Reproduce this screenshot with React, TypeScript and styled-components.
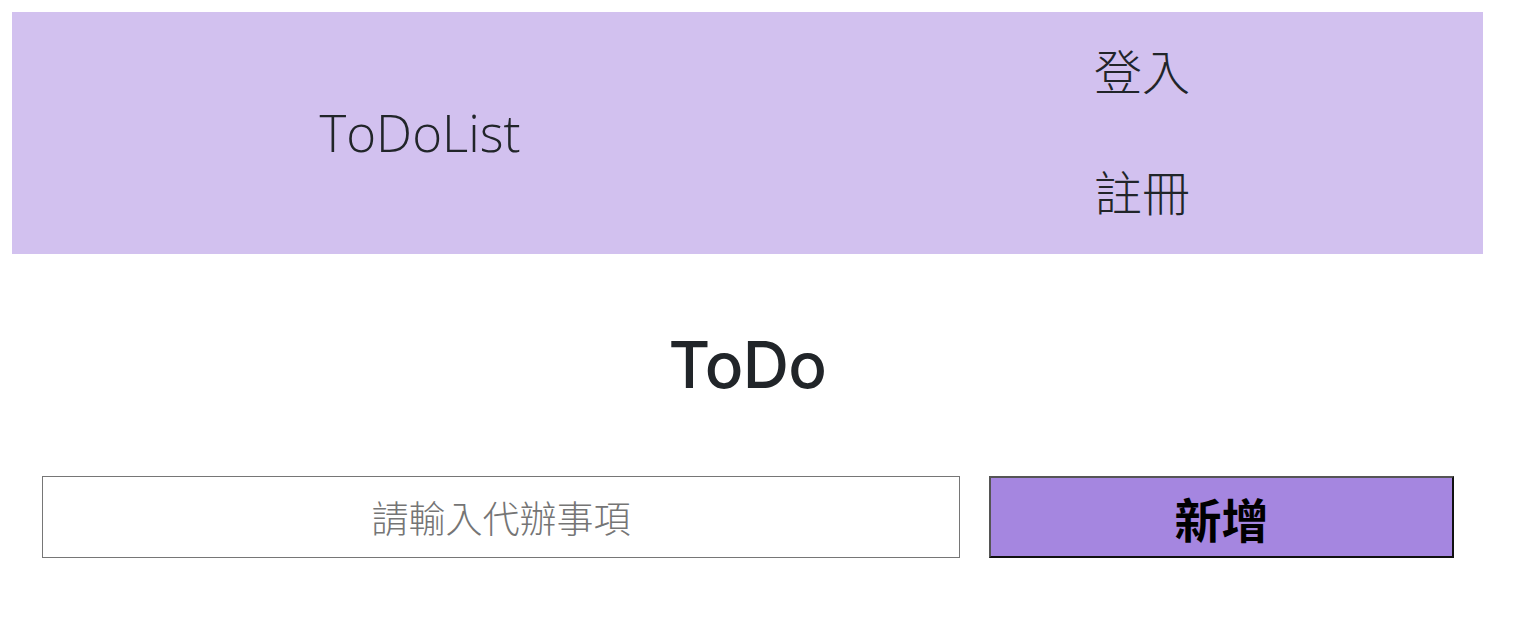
import React from "react";
import styled, { createGlobalStyle } from "styled-components";

const Global = createGlobalStyle`
  html, body { margin: 0; padding: 0; background: #fff; }
  body {
    padding: 12px;
    font-family: "Open Sans", "Noto Sans CJK TC", sans-serif;
    color: #212529;
  }
`;

const Page = styled.div`
  width: 1471px;
`;

const Header = styled.header`
  height: 242px;
  background: #d2c1ef;
  display: grid;
  grid-template-columns: 816px 1fr;
  align-items: center;
`;

const Brand = styled.div`
  text-align: center;
  font-family: "Open Sans", "Noto Sans CJK TC", sans-serif;
  font-weight: 300;
  font-size: 51px;
  color: #212529;
  line-height: 1;
  padding-bottom: 2px;
`;

const Nav = styled.nav`
  display: flex;
  flex-direction: column;
  gap: 71px;
  padding-left: 266px;
  padding-bottom: 7px;
`;

const NavLink = styled.a`
  font-family: "Noto Sans CJK TC", sans-serif;
  font-weight: 300;
  font-size: 48px;
  line-height: 50px;
  color: #212529;
  text-decoration: none;
  cursor: pointer;
`;

const Title = styled.h1`
  margin: 66px 0 0;
  text-align: center;
  font-family: Inter, "Open Sans", "Noto Sans CJK TC", sans-serif;
  font-weight: 500;
  font-size: 64px;
  letter-spacing: -0.6px;
  line-height: 90px;
  color: #212529;
`;

const Form = styled.form`
  display: grid;
  grid-template-columns: 918px 465px;
  column-gap: 29px;
  padding: 0 30px;
  margin-top: 66px;
`;

const Input = styled.input`
  box-sizing: border-box;
  height: 82px;
  border: 1px solid #767676;
  border-radius: 0;
  text-align: center;
  font-family: "Noto Sans CJK TC", sans-serif;
  font-weight: 300;
  font-size: 37px;
  color: #212529;
  outline: none;
  &::placeholder { color: #757575; }
`;

const Button = styled.button`
  box-sizing: border-box;
  height: 82px;
  background: #a586e0;
  border: 2px solid;
  border-color: #555 #111 #111 #555;
  font-family: "Noto Sans CJK TC", sans-serif;
  font-weight: 700;
  font-size: 47px;
  color: #000;
  padding: 0;
  cursor: pointer;
`;

export default function App() {
  return (
    <>
      <Global />
      <Page>
        <Header>
          <Brand>ToDoList</Brand>
          <Nav>
            <NavLink>登入</NavLink>
            <NavLink>註冊</NavLink>
          </Nav>
        </Header>
        <Title>ToDo</Title>
        <Form onSubmit={(e) => e.preventDefault()}>
          <Input placeholder="請輸入代辦事項" />
          <Button type="submit">新增</Button>
        </Form>
      </Page>
    </>
  );
}
